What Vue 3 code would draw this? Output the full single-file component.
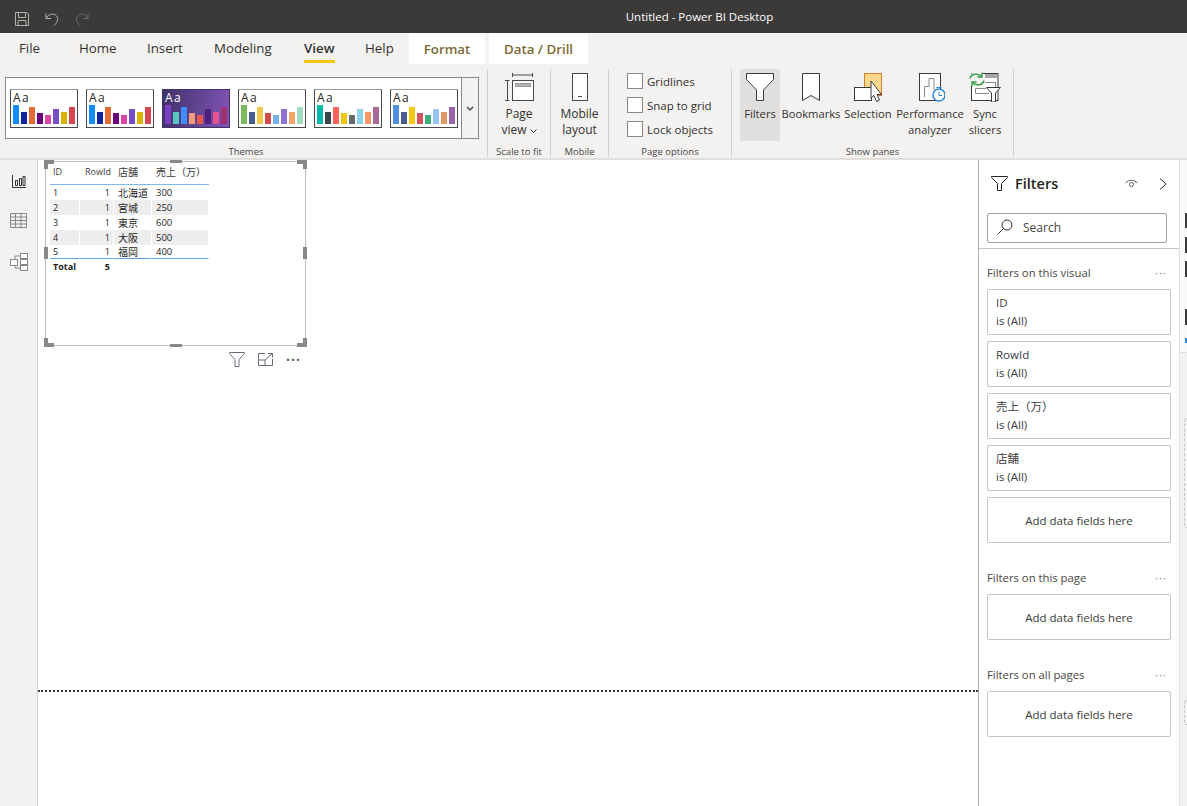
<script setup>
const tabs = [
  { label: "File", width: 60 },
  { label: "Home", width: 68 },
  { label: "Insert", width: 67 },
  { label: "Modeling", width: 90 },
  { label: "View", width: 61, active: true },
  { label: "Help", width: 44 },
];

const defaultBars = [["#118dff", 19], ["#12239e", 12], ["#e66c37", 17], ["#6b007b", 11], ["#e044a7", 9], ["#744ec2", 15], ["#d9b300", 12], ["#d64550", 17]];

const themes = [
  { bars: defaultBars },
  { bars: defaultBars },
  { dark: true, bars: [["#7a3fc0", 19], ["#5ac6c0", 12], ["#3f8cff", 17], ["#f79a75", 11], ["#e8574c", 9], ["#4f1f7e", 15], ["#e8528f", 12], ["#a03070", 17]] },
  { bars: [["#7cba5f", 19], ["#4a5d90", 12], ["#efc94c", 17], ["#d14b4b", 11], ["#72b0e6", 9], ["#8f73d4", 15], ["#f2a56b", 12], ["#9fdcc0", 17]] },
  { bars: [["#01b8aa", 19], ["#374649", 12], ["#fd625e", 17], ["#f2c80f", 11], ["#5f6b6d", 9], ["#8ad4eb", 15], ["#fe9666", 12], ["#a66999", 17]] },
  { bars: [["#4f8ede", 19], ["#4a5d90", 12], ["#f4c815", 17], ["#d9535f", 11], ["#3aae7c", 9], ["#93c5f0", 15], ["#df9a68", 12], ["#9c64a6", 17]] },
];

const checks = ["Gridlines", "Snap to grid", "Lock objects"];

const rows = [
  { id: 1, rowId: 1, store: "北海道", sales: 300 },
  { id: 2, rowId: 1, store: "宮城", sales: 250 },
  { id: 3, rowId: 1, store: "東京", sales: 600 },
  { id: 4, rowId: 1, store: "大阪", sales: 500 },
  { id: 5, rowId: 1, store: "福岡", sales: 400 },
];

const handles = ["tl", "tm", "tr", "ml", "mr", "bl", "bm", "br"];
const visualFilters = ["ID", "RowId", "売上（万）", "店舗"];
</script>

<template>
  <div class="app">
    <header class="titlebar">
      <div class="quick">
        <svg width="16" height="16" viewBox="0 0 16 16" fill="none" stroke="#b3b0ad">
          <path d="M1.5 1.5H13L14.5 3V14.5H1.5Z" />
          <path d="M4.5 1.5V6.5H11.5V1.5M4 14.5V9.5H12V14.5" />
        </svg>
        <svg width="16" height="16" viewBox="0 0 16 16" fill="none" stroke="#b3b0ad">
          <path d="M2 2.5V7.5H7M2 7.5C4 3.5 8 2 11.5 4C15 6.5 14 11 10 14.5" />
        </svg>
        <svg width="16" height="16" viewBox="0 0 16 16" fill="none" stroke="#6b6a68">
          <path d="M14 2.5V7.5H9M14 7.5C12 3.5 8 2 4.5 4C1 6.5 2 11 6 14.5" />
        </svg>
      </div>
      <div class="doc-title">Untitled - Power BI Desktop</div>
    </header>

    <nav class="tabs">
      <div
        v-for="tab in tabs"
        :key="tab.label"
        class="tab"
        :class="{ active: tab.active }"
        :style="{ width: tab.width + 'px' }"
      >
        <span>{{ tab.label }}</span>
      </div>
      <div class="tab context format">Format</div>
      <div class="tab context drill">Data / Drill</div>
    </nav>

    <section class="ribbon">
      <div class="group themes-group">
        <div class="group-body">
          <div class="gallery">
            <div class="gallery-items">
              <div v-for="(theme, i) in themes" :key="i" class="theme" :class="{ dark: theme.dark }">
                <div class="theme-aa">Aa</div>
                <div class="theme-bars">
                  <i
                    v-for="(bar, j) in theme.bars"
                    :key="j"
                    :style="{ background: bar[0], height: bar[1] + 'px' }"
                  ></i>
                </div>
              </div>
            </div>
            <div class="gallery-more">
              <svg width="8" height="5" viewBox="0 0 8 5" fill="none" stroke="#323130" stroke-width="1.2">
                <path d="M1 1L4 4L7 1" />
              </svg>
            </div>
          </div>
        </div>
        <div class="group-label">Themes</div>
      </div>

      <div class="group scale-group">
        <div class="group-body center">
          <div class="big-button">
            <svg width="30" height="30" viewBox="0 0 30 30" fill="none" stroke="#4a4a4a">
              <path d="M8.5 1V5M28.5 1V5M8.5 3H28.5" />
              <path d="M1 8.5H5.5M1 28.5H5.5M3.5 8.5V28.5" />
              <rect x="8.5" y="8.5" width="21" height="20" fill="#fff" />
              <rect x="11.5" y="11.5" width="15" height="3" fill="#b3b3b3" stroke="#9a9a9a" />
            </svg>
            <div class="big-label">
              Page<br />view
              <svg class="mini-chev" width="7" height="4" viewBox="0 0 7 4" fill="none" stroke="#323130">
                <path d="M.5 .5L3.5 3.5L6.5 .5" />
              </svg>
            </div>
          </div>
        </div>
        <div class="group-label">Scale to fit</div>
      </div>

      <div class="group mobile-group">
        <div class="group-body center">
          <div class="big-button">
            <svg width="18" height="30" viewBox="0 0 18 30" fill="#fff" stroke="#4a4a4a">
              <rect x="1.5" y="1.5" width="15" height="27" />
              <path d="M7 24.5H11" />
            </svg>
            <div class="big-label">Mobile<br />layout</div>
          </div>
        </div>
        <div class="group-label">Mobile</div>
      </div>

      <div class="group options-group">
        <div class="group-body checks">
          <label v-for="item in checks" :key="item" class="check">
            <span class="check-box"></span>
            {{ item }}
          </label>
        </div>
        <div class="group-label">Page options</div>
      </div>

      <div class="group panes-group">
        <div class="group-body panes">
          <div class="pane-button pane-filters">
            <svg width="30" height="30" viewBox="0 0 30 30" fill="#fff" stroke="#3b3a39">
              <path d="M1.5 1.5H28.5V7.5L18.5 18V28.5H11.5V18L1.5 7.5Z" />
            </svg>
            <div class="big-label">Filters</div>
          </div>
          <div class="pane-button pane-bookmarks">
            <svg width="30" height="30" viewBox="0 0 30 30" fill="#fff" stroke="#3b3a39">
              <path d="M6.5 1.5H23.5V28.5L15 23.5L6.5 28.5Z" />
            </svg>
            <div class="big-label">Bookmarks</div>
          </div>
          <div class="pane-button pane-selection">
            <svg width="30" height="30" viewBox="0 0 30 30" fill="#fff" stroke="#3b3a39">
              <rect x="11.5" y="1.5" width="17" height="22" fill="#fad98c" stroke="#d9822b" />
              <rect x="1.5" y="15.5" width="17" height="13" />
              <path d="M18 9V26L21 23.5L23.5 29.5L26.5 28L24 22.5H28.5Z" />
            </svg>
            <div class="big-label">Selection</div>
          </div>
          <div class="pane-button pane-perf">
            <svg width="30" height="30" viewBox="0 0 30 30" fill="none">
              <rect x="4.5" y="1.5" width="21" height="27" fill="#fff" stroke="#3b3a39" />
              <path d="M9.5 25V14.5H14V6.5H19V18" stroke="#8a8886" />
              <circle cx="24" cy="23" r="6" fill="#fff" stroke="#2b88d8" stroke-width="1.5" />
              <path d="M24 19.5V23.5H27M21.5 15.5H26.5" stroke="#2b88d8" />
            </svg>
            <div class="big-label">Performance<br />analyzer</div>
          </div>
          <div class="pane-button pane-sync">
            <svg width="32" height="30" viewBox="0 0 32 30" fill="none">
              <rect x="2.5" y="1.5" width="26.5" height="27" fill="#fff" stroke="#3b3a39" />
              <rect x="16" y="2" width="13" height="4" fill="#a6a6a6" />
              <path d="M16 10.5H26.5V15M20 21.5H6.5V16.5H17" stroke="#8a8886" />
              <path d="M17.5 15.5H31.5L26.5 21V30H22.5V21Z" fill="#fff" stroke="#3b3a39" />
              <circle cx="8" cy="7.5" r="8" fill="#f3f2f1" />
              <path d="M1 6.5C2 2 9 .5 12.500 4.500M15 8.500C14 13 7 14.500 3.500 10.500" stroke="#3a9d4c" stroke-width="1.5" />
              <path d="M13 .5V5H8.500M3 14.500V10H7.500" stroke="#3a9d4c" stroke-width="1.5" />
            </svg>
            <div class="big-label">Sync<br />slicers</div>
          </div>
        </div>
        <div class="group-label">Show panes</div>
      </div>
    </section>

    <main class="workspace">
      <aside class="rail">
        <svg width="14" height="13" viewBox="0 0 14 13" fill="none" stroke="#323130">
          <path d="M.5 0V12.5H14" />
          <path d="M3.5 5.5H5.5V10.5H3.5ZM7.5 3.5H9.5V10.5H7.5ZM11 1.5H13V10.5H11Z" />
        </svg>
        <svg width="17" height="15" viewBox="0 0 17 15" fill="none" stroke="#8a8886">
          <path d="M.5 .5H16.5V14.5H.5ZM.5 4H16.5M.5 7.5H16.5M.5 11H16.5M5.5 .5V14.5M11 .5V14.5" />
        </svg>
        <svg width="18" height="18" viewBox="0 0 18 18" fill="#fff" stroke="#8a8886">
          <rect x=".5" y="6.5" width="7" height="6" />
          <rect x="10.5" y=".5" width="7" height="5" />
          <rect x="10.5" y="6.5" width="7" height="5" />
          <rect x="10.5" y="12.5" width="7" height="5" />
          <path d="M7.5 3H10.5M5 6.5V3H7.5M5 12.5V15H10.5" fill="none" />
        </svg>
      </aside>

      <div class="canvas">
        <div class="visual">
          <span v-for="h in handles" :key="h" class="handle" :class="h"></span>
          <table class="data-table">
            <thead>
              <tr>
                <th class="col-id">ID</th>
                <th class="col-row num">RowId</th>
                <th class="col-store">店舗</th>
                <th class="col-sales">売上（万）</th>
              </tr>
            </thead>
            <tbody>
              <tr v-for="row in rows" :key="row.id">
                <td>{{ row.id }}</td>
                <td class="num">{{ row.rowId }}</td>
                <td>{{ row.store }}</td>
                <td>{{ row.sales }}</td>
              </tr>
            </tbody>
            <tfoot>
              <tr>
                <td>Total</td>
                <td class="num">5</td>
                <td></td>
                <td></td>
              </tr>
            </tfoot>
          </table>
          <div class="visual-actions">
            <svg width="16" height="15" viewBox="0 0 16 15" fill="none" stroke="#6b6a78">
              <path d="M.5 .5H15.5V1.5L10 7.5V14.5H6V7.5L.5 1.5Z" />
            </svg>
            <svg width="15" height="13" viewBox="0 0 15 13" fill="none" stroke="#6b6a78">
              <path d="M7 .5H.5V12.5H14.5V6M.5 7H7V12.5M7 7L14.5 .5M10 .5H14.5V4.5" />
            </svg>
            <span class="dots">···</span>
          </div>
        </div>
        <div class="page-break"></div>
      </div>

      <aside class="filters">
        <div class="filters-head">
          <svg width="17" height="15" viewBox="0 0 17 15" fill="none" stroke="#252423">
            <path d="M.5 .5H16.5V1.5L10.5 7.5V14.5H6.5V7.5L.5 1.5Z" />
          </svg>
          <span class="filters-title">Filters</span>
          <svg class="eye" width="13" height="9" viewBox="0 0 13 9" fill="none" stroke="#605e5c">
            <path d="M.5 4C3 .5 10 .5 12.5 4" />
            <circle cx="6.5" cy="5.5" r="2" />
          </svg>
          <svg width="8" height="12" viewBox="0 0 8 12" fill="none" stroke="#323130">
            <path d="M1 .5L7 6L1 11.5" />
          </svg>
        </div>
        <div class="search-wrap">
          <div class="search">
            <svg width="16" height="16" viewBox="0 0 16 16" fill="none" stroke="#323130">
              <circle cx="10" cy="6" r="5" />
              <path d="M6.5 9.5L.5 15.5" />
            </svg>
            <span>Search</span>
          </div>
        </div>
        <div class="filter-scroll">
          <div class="filter-section">
            <div class="section-head"><span>Filters on this visual</span><b>···</b></div>
            <div v-for="name in visualFilters" :key="name" class="filter-card">
              <div>{{ name }}</div>
              <div>is (All)</div>
            </div>
            <div class="filter-card add">Add data fields here</div>
          </div>
          <div class="filter-section">
            <div class="section-head"><span>Filters on this page</span><b>···</b></div>
            <div class="filter-card add">Add data fields here</div>
          </div>
          <div class="filter-section">
            <div class="section-head"><span>Filters on all pages</span><b>···</b></div>
            <div class="filter-card add">Add data fields here</div>
          </div>
        </div>
      </aside>

      <div class="side-strip">
        <div class="strip-top">
          <i class="mark m1"></i>
          <i class="mark m2"></i>
          <i class="mark m3"></i>
          <i class="mark m4"></i>
          <i class="mark m5"></i>
        </div>
        <div class="dash d1"></div>
        <div class="dash d2"></div>
      </div>
    </main>
  </div>
</template>

<style scoped>
.app {
  width: 1187px;
  height: 806px;
  display: flex;
  flex-direction: column;
  overflow: hidden;
  background: #fff;
  color: #252423;
  font-family: "Open Sans", "Noto Sans CJK JP", sans-serif;
  font-size: 12px;
}

.titlebar {
  height: 33px;
  flex: none;
  background: #3b3a39;
  position: relative;
  display: flex;
  align-items: center;
}

.quick {
  display: flex;
  gap: 14px;
  padding-left: 14px;
  padding-top: 4px;
}

.doc-title {
  position: absolute;
  left: 212px;
  right: 0;
  text-align: center;
  color: #fff;
  font-size: 11.5px;
}

.tabs {
  height: 31px;
  flex: none;
  display: flex;
  background: #f3f2f1;
  font-size: 13.3px;
  padding-left: 19px;
}

.tab {
  display: flex;
  align-items: center;
  color: #323130;
  height: 31px;
}

.tab span {
  position: relative;
  line-height: 31px;
}

.tab.active span {
  font-weight: 600;
}

.tab.active span::after {
  content: "";
  position: absolute;
  left: 0;
  right: 0;
  bottom: 1px;
  height: 3px;
  background: #f2c811;
}

.tab.context {
  background: #fff;
  color: #7c6a35;
  font-weight: 600;
  justify-content: center;
}

.format {
  width: 76px;
}

.drill {
  width: 99px;
  margin-left: 4px;
}

.ribbon {
  height: 96px;
  flex: none;
  box-sizing: border-box;
  display: flex;
  background: #f3f2f1;
  border-bottom: 2px solid #e1dfdd;
  padding: 5px 0 0 5px;
}

.group {
  display: flex;
  flex-direction: column;
  border-right: 1px solid #d2d0ce;
  height: 88px;
  box-sizing: border-box;
}

.group-body {
  flex: 1;
  min-height: 0;
}

.group-body.center {
  display: flex;
  justify-content: center;
}

.group-label {
  text-align: center;
  font-size: 9.5px;
  color: #484644;
  height: 12px;
  line-height: 14px;
}

.themes-group {
  width: 483px;
}

.gallery {
  width: 474px;
  height: 62px;
  margin-top: 8px;
  border: 1px solid #8a8886;
  box-sizing: border-box;
  background: #fff;
  display: flex;
}

.gallery-items {
  flex: 1;
  display: flex;
  gap: 8px;
  align-items: center;
  padding-left: 4px;
}

.theme {
  width: 68px;
  height: 39px;
  box-sizing: border-box;
  border: 1px solid #4a4a4a;
  border-top-color: #9a9a9a;
  background: #fff;
  position: relative;
}

.theme.dark {
  background: linear-gradient(100deg, #3f3168, #8254b8);
  color: #fff;
  border-color: #3f3168;
}

.theme-aa {
  font-size: 12px;
  line-height: 11px;
  letter-spacing: 1.5px;
  padding-left: 2px;
  padding-top: 2px;
}

.theme-bars {
  position: absolute;
  left: 2px;
  right: 2px;
  bottom: 3px;
  display: flex;
  align-items: flex-end;
  gap: 2px;
}

.theme-bars i {
  display: block;
  flex: 1;
}

.gallery-more {
  width: 16px;
  background: #f3f2f1;
  border-left: 1px solid #8a8886;
  display: flex;
  align-items: center;
  justify-content: center;
}

.scale-group {
  width: 63px;
}

.mobile-group {
  width: 58px;
}

.big-button {
  display: flex;
  flex-direction: column;
  align-items: center;
  padding-top: 3px;
}

.big-label {
  text-align: center;
  line-height: 16px;
  font-size: 12px;
  margin-top: 4px;
  white-space: nowrap;
  color: #323130;
}

.mini-chev {
  vertical-align: middle;
}

.options-group {
  width: 123px;
}

.checks {
  padding: 4px 0 0 18px;
  display: flex;
  flex-direction: column;
  gap: 8px;
}

.check {
  display: flex;
  align-items: center;
  gap: 4px;
  height: 16px;
  color: #323130;
  white-space: nowrap;
  font-size: 11.5px;
}

.check-box {
  width: 16px;
  height: 16px;
  box-sizing: border-box;
  border: 1px solid #8a8886;
  background: #fff;
}

.panes-group {
  width: 282px;
}

.panes {
  display: flex;
  padding-left: 8px;
}

.pane-button {
  display: flex;
  flex-direction: column;
  align-items: center;
  height: 72px;
  padding-top: 3px;
  box-sizing: border-box;
}

.pane-button .big-label {
  font-size: 11.2px;
}

.pane-filters {
  width: 40px;
  background: #e1dfdd;
}

.pane-bookmarks {
  width: 62px;
}

.pane-selection {
  width: 52px;
}

.pane-perf {
  width: 72px;
}

.pane-sync {
  width: 38px;
}

.workspace {
  flex: 1;
  min-height: 0;
  display: flex;
}

.rail {
  width: 38px;
  flex: none;
  box-sizing: border-box;
  background: #f3f2f1;
  border-right: 1px solid #d2d0ce;
  display: flex;
  flex-direction: column;
  align-items: center;
  gap: 25px;
  padding-top: 15px;
}

.canvas {
  flex: 1;
  position: relative;
  background: #fff;
}

.visual {
  position: absolute;
  left: 7px;
  top: 1px;
  width: 261px;
  height: 185px;
  box-sizing: border-box;
  border: 1px solid #bdbdbd;
  padding: 2px 0 0 4px;
}

.handle {
  position: absolute;
  background: #8a8886;
}

.handle.tl,
.handle.tr,
.handle.bl,
.handle.br {
  width: 10px;
  height: 9px;
}

.handle.tm,
.handle.bm {
  width: 12px;
  height: 3px;
  left: 124px;
}

.handle.ml,
.handle.mr {
  width: 4px;
  height: 12px;
  top: 85px;
}

.handle.tl {
  left: -2px;
  top: -2px;
  clip-path: polygon(0 0, 100% 0, 100% 4px, 4px 4px, 4px 100%, 0 100%);
}

.handle.tr {
  right: -2px;
  top: -2px;
  clip-path: polygon(0 0, 100% 0, 100% 100%, 6px 100%, 6px 4px, 0 4px);
}

.handle.bl {
  left: -2px;
  bottom: -2px;
  clip-path: polygon(0 0, 4px 0, 4px 5px, 100% 5px, 100% 100%, 0 100%);
}

.handle.br {
  right: -2px;
  bottom: -2px;
  clip-path: polygon(6px 0, 100% 0, 100% 100%, 0 100%, 0 5px, 6px 5px);
}

.handle.tm {
  top: -2px;
}

.handle.bm {
  bottom: -2px;
}

.handle.ml {
  left: -2px;
}

.handle.mr {
  right: -2px;
}

.data-table {
  border-collapse: separate;
  border-spacing: 0;
  font-size: 9px;
  color: #252423;
  table-layout: fixed;
  width: 159px;
}

.data-table th,
.data-table td {
  box-sizing: border-box;
  line-height: 12px;
}

.data-table th {
  font-weight: 400;
  text-align: left;
  height: 21px;
  padding: 0 3px 4px;
  color: #3b3a39;
  border-bottom: 1px solid #7fb8ea;
  white-space: nowrap;
}

.data-table td {
  height: 15px;
  padding: 0 3px;
  white-space: nowrap;
  border-right: 1px solid #fff;
}

.data-table th.col-store,
.data-table th.col-sales,
.data-table tbody td:nth-child(3) {
  font-size: 10px;
  padding-left: 4px;
}

.data-table tbody td:nth-child(4) {
  font-size: 9.5px;
  padding-left: 4px;
}

.data-table tbody tr:nth-child(even) td {
  background: #eeeeee;
}

.data-table tbody tr:last-child td {
  height: 14px;
  border-bottom: 1px solid #5ea5e6;
}

.data-table tfoot td {
  font-weight: 700;
  height: 16px;
}

.data-table .num {
  text-align: right;
  padding-right: 3px;
}

.col-id {
  width: 30px;
}

.col-row {
  width: 34px;
}

.col-store {
  width: 38px;
}

.col-sales {
  width: 57px;
}

.visual-actions {
  position: absolute;
  left: 183px;
  top: 190px;
  display: flex;
  align-items: center;
  gap: 13px;
}

.dots {
  color: #605e5c;
  font-size: 14px;
  letter-spacing: 1px;
  line-height: 14px;
  font-weight: 700;
}

.page-break {
  position: absolute;
  left: 0;
  right: 0;
  top: 530px;
  border-top: 2px dotted #3b3a39;
}

.filters {
  width: 202px;
  flex: none;
  box-sizing: border-box;
  border-left: 1px solid #b3b0ad;
  border-right: 1px solid #e1dfdd;
  display: flex;
  flex-direction: column;
}

.filters-head {
  display: flex;
  align-items: center;
  height: 47px;
  padding: 0 12px 0 12px;
  flex: none;
}

.filters-title {
  font-size: 14.5px;
  font-weight: 600;
  margin-left: 7px;
  flex: 1;
}

.eye {
  margin-right: 21px;
}

.search-wrap {
  padding: 6px 0 5px 8px;
  border-bottom: 1px solid #c8c6c4;
  flex: none;
}

.search {
  width: 180px;
  height: 30px;
  box-sizing: border-box;
  border: 1px solid #a19f9d;
  border-radius: 2px;
  display: flex;
  align-items: center;
  padding: 0 0 2px 9px;
  gap: 10px;
  color: #484644;
}

.filter-scroll {
  padding: 16px 8px 0;
  flex: 1;
}

.filter-section + .filter-section {
  margin-top: 27px;
}

.section-head {
  display: flex;
  justify-content: space-between;
  align-items: center;
  height: 16px;
  margin-bottom: 8px;
  padding: 0 4px 2px 0;
  box-sizing: border-box;
  font-size: 11.3px;
  color: #484644;
}

.section-head b {
  font-weight: 400;
  color: #8a8886;
  letter-spacing: 1px;
}

.filter-card {
  width: 184px;
  height: 46px;
  box-sizing: border-box;
  border: 1px solid #c8c6c4;
  border-radius: 2px;
  padding: 4px 8px;
  margin-bottom: 6px;
  line-height: 18px;
  color: #3b3a39;
  font-size: 11.5px;
}

.filter-card.add {
  display: flex;
  align-items: center;
  justify-content: center;
  margin-bottom: 0;
  padding: 2px 0 0;
}

.side-strip {
  width: 7px;
  flex: none;
  background: #f3f2f1;
}

.strip-top {
  height: 193px;
  box-sizing: border-box;
  background: #faf9f8;
  border-bottom: 1px solid #e1dfdd;
  padding: 53px 0 0 5px;
}

.mark {
  display: block;
  width: 2px;
  height: 16px;
  background: #3b3a39;
}

.m1 {
  height: 15px;
}

.m2 {
  margin-top: 9px;
}

.m3 {
  margin-top: 8px;
}

.m4 {
  margin-top: 32px;
}

.m5 {
  margin-top: 13px;
  height: 5px;
  background: #2b88d8;
}

.dash {
  width: 3px;
  margin-left: 4px;
  box-sizing: border-box;
  border: 1px dashed #c8c6c4;
  border-right: none;
  border-radius: 3px 0 0 3px;
}

.d1 {
  height: 110px;
  margin-top: 65px;
}

.d2 {
  height: 25px;
  margin-top: 172px;
}
</style>
